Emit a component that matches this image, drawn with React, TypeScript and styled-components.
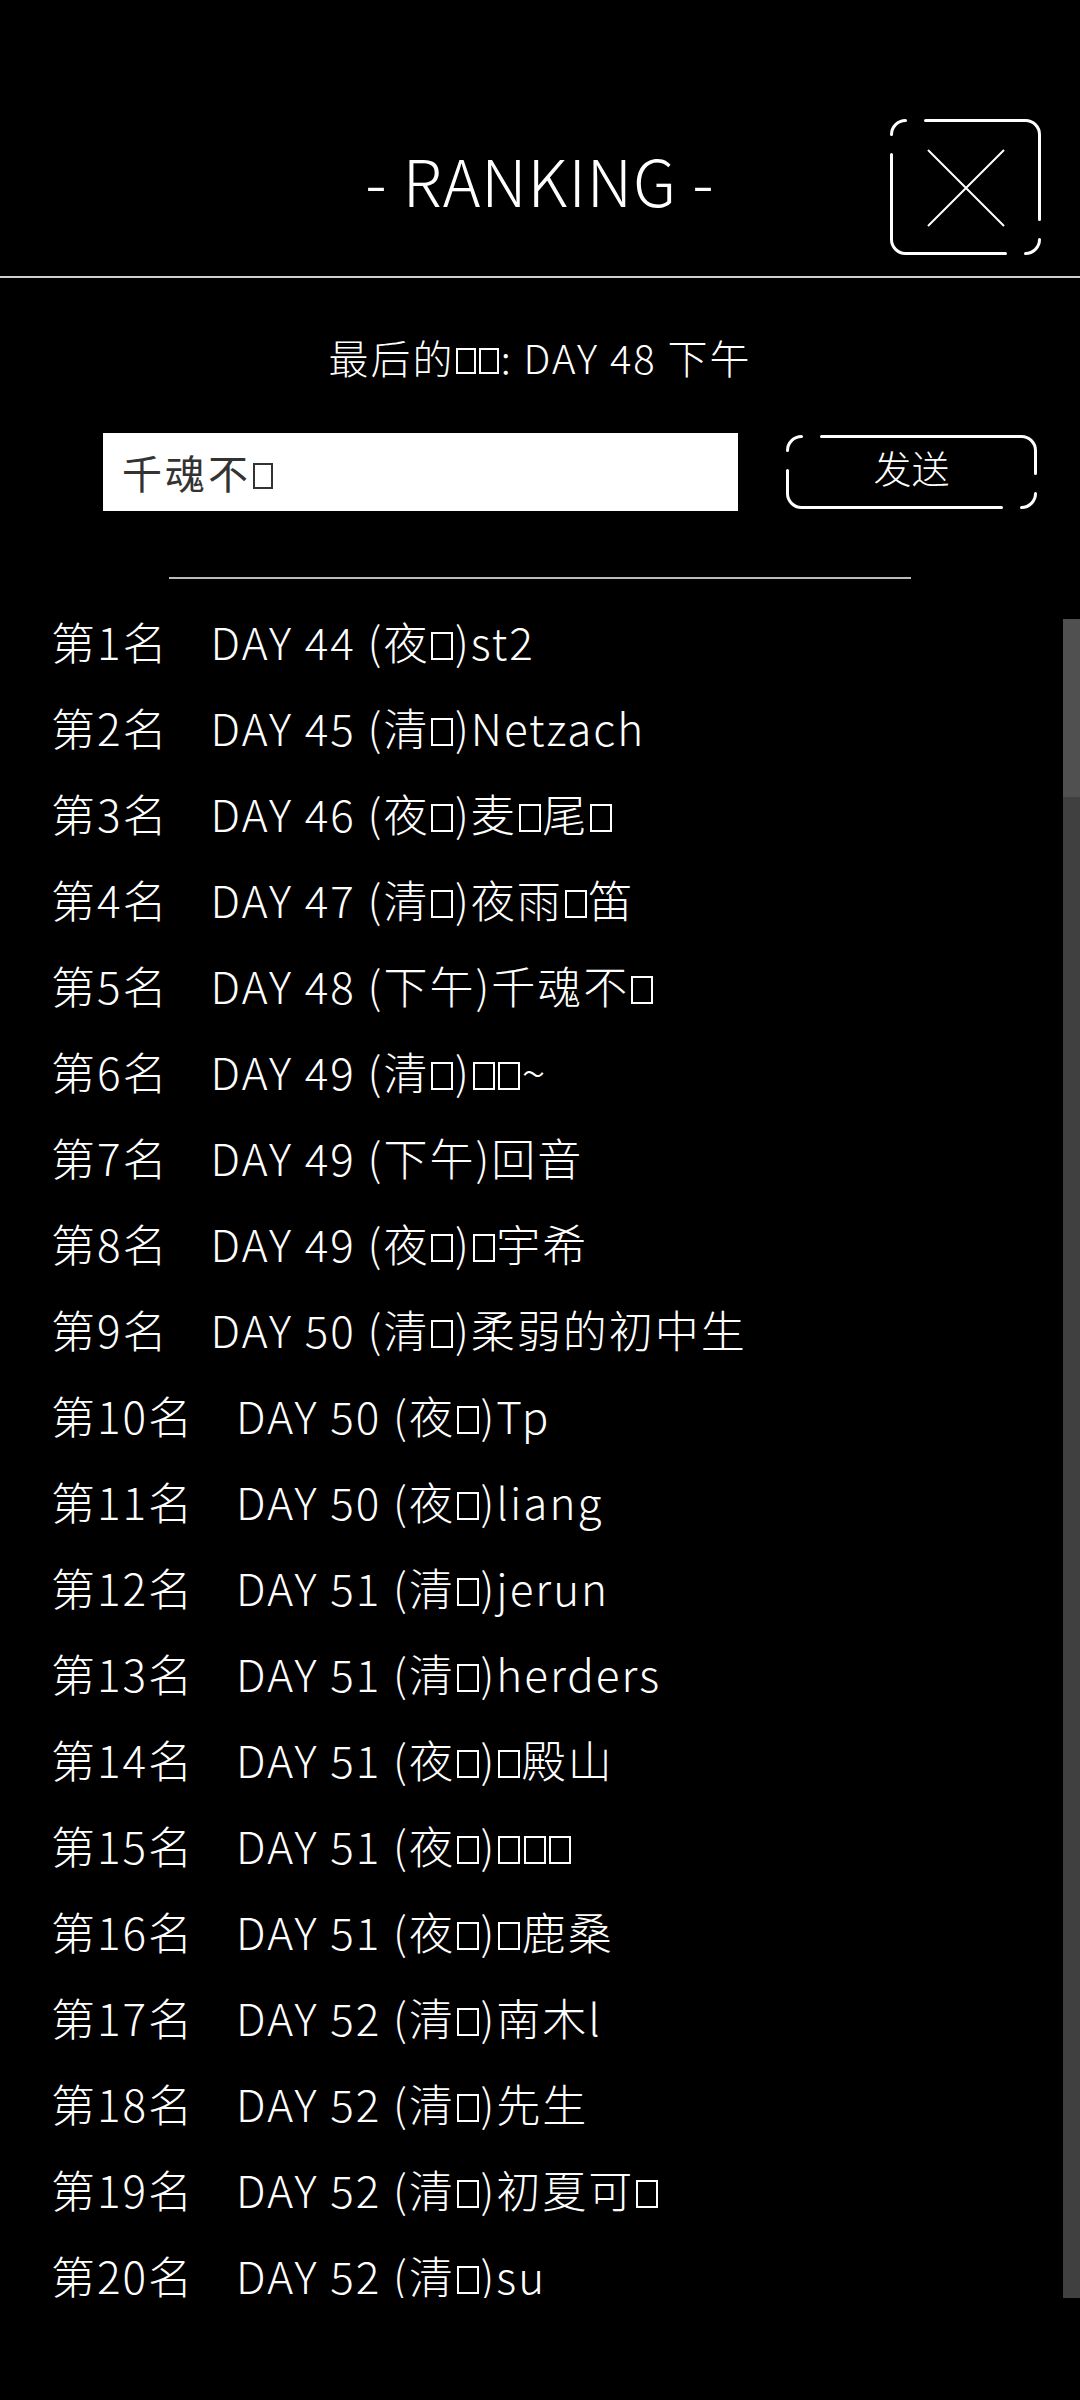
import React from 'react'
import styled, { createGlobalStyle } from 'styled-components'

const GlobalStyle = createGlobalStyle`
	html, body {
		margin: 0;
		padding: 0;
		background: #000;
	}
	body {
		font-family: "Noto Sans CJK SC", "Noto Sans", sans-serif;
		color: #fff;
	}
`

type Entry = { day: number; time: string; name: string }

// ▯ marks glyphs the game font could not draw
const rankings: Entry[] = [
	{ day: 44, time: '夜▯', name: 'st2' },
	{ day: 45, time: '清▯', name: 'Netzach' },
	{ day: 46, time: '夜▯', name: '麦▯尾▯' },
	{ day: 47, time: '清▯', name: '夜雨▯笛' },
	{ day: 48, time: '下午', name: '千魂不▯' },
	{ day: 49, time: '清▯', name: '▯▯~' },
	{ day: 49, time: '下午', name: '回音' },
	{ day: 49, time: '夜▯', name: '▯宇希' },
	{ day: 50, time: '清▯', name: '柔弱的初中生' },
	{ day: 50, time: '夜▯', name: 'Tp' },
	{ day: 50, time: '夜▯', name: 'liang' },
	{ day: 51, time: '清▯', name: 'jerun' },
	{ day: 51, time: '清▯', name: 'herders' },
	{ day: 51, time: '夜▯', name: '▯殿山' },
	{ day: 51, time: '夜▯', name: '▯▯▯' },
	{ day: 51, time: '夜▯', name: '▯鹿桑' },
	{ day: 52, time: '清▯', name: '南木l' },
	{ day: 52, time: '清▯', name: '先生' },
	{ day: 52, time: '清▯', name: '初夏可▯' },
	{ day: 52, time: '清▯', name: 'su' },
]

/* 모서리가 끊어진 테두리 (닫기 / 发送 버튼) */
const framePath = (w: number, h: number) => {
	const s = 1.5, r = 14, g = 20
	const x0 = s, y0 = s, x1 = w - s, y1 = h - s
	return [
		`M${x0} ${y0 + r} A${r} ${r} 0 0 1 ${x0 + r} ${y0}`,
		`M${x0 + r + g} ${y0} H${x1 - r} A${r} ${r} 0 0 1 ${x1} ${y0 + r} V${y1 - r - g}`,
		`M${x1} ${y1 - r} A${r} ${r} 0 0 1 ${x1 - r} ${y1}`,
		`M${x1 - r - g} ${y1} H${x0 + r} A${r} ${r} 0 0 1 ${x0} ${y1 - r} V${y0 + r + g}`,
	].join(' ')
}

const BrokenFrame: React.FC<{ w: number; h: number }> = ({ w, h }) => (
	<FrameSvg width={w} height={h} viewBox={`0 0 ${w} ${h}`}>
		<path d={framePath(w, h)} fill="none" stroke="#fff" strokeWidth="3" strokeLinecap="round" />
	</FrameSvg>
)

const splitTofu = (text: string) =>
	text.split(/(▯)/).filter(Boolean).map((part, i) =>
		part === '▯' ? <Tofu key={i} /> : <React.Fragment key={i}>{part}</React.Fragment>
	)

const App: React.FC = () => {
	return (
		<Page>
			<GlobalStyle />
			<Header>
				<span />
				<Title>- RANKING -</Title>
				<CloseButton aria-label="close">
					<BrokenFrame w={151} h={136} />
					<svg width="151" height="136" viewBox="0 0 151 136">
						<path d="M38 31 L114 107 M114 31 L38 107" stroke="#fff" strokeWidth="2" />
					</svg>
				</CloseButton>
			</Header>

			<LastRecord>最后的<Tofu /><Tofu />: DAY 48 下午</LastRecord>

			<SubmitRow>
				<NameInput>{splitTofu('千魂不▯')}</NameInput>
				<SendButton>
					<BrokenFrame w={251} h={74} />
					<span>发送</span>
				</SendButton>
			</SubmitRow>

			<Divider />

			<ListArea>
				<List>
					{rankings.map((r, i) => (
						<Row key={i}>
							<Rank>第{i + 1}名</Rank>
							<span>DAY {r.day} ({splitTofu(r.time)}){splitTofu(r.name)}</span>
						</Row>
					))}
				</List>
				<ScrollTrack>
					<ScrollThumb />
				</ScrollTrack>
			</ListArea>
		</Page>
	)
}
export default App

const Page = styled.div`
	width: 1080px;
	height: 2400px;
	background: #000;
	display: flex;
	flex-direction: column;
	overflow: hidden;
`

const Header = styled.header`
	display: grid;
	grid-template-columns: 1fr auto 1fr;
	align-items: center;
	padding: 119px 39px 21px;
	border-bottom: 2px solid #cfcfcf;
`

const Title = styled.h1`
	margin: 0 0 14px;
	font-size: 64px;
	font-weight: 300;
	line-height: 1.3;
	letter-spacing: 1px;
	color: #fff;
	white-space: pre;
`

const CloseButton = styled.button`
	justify-self: end;
	position: relative;
	width: 151px;
	height: 136px;
	padding: 0;
	border: none;
	background: transparent;

	svg {
		display: block;
	}
`

const FrameSvg = styled.svg`
	position: absolute;
	top: 0;
	left: 0;
`

const Tofu = styled.span`
	display: inline-block;
	width: 0.5em;
	height: 0.64em;
	margin: 0 0.04em;
	border: 2px solid currentColor;
	box-sizing: border-box;
	vertical-align: baseline;
`

const LastRecord = styled.div`
	margin-top: 50px;
	text-align: center;
	font-size: 40px;
	font-weight: 300;
	line-height: 58px;
	letter-spacing: 2px;
`

const SubmitRow = styled.div`
	display: flex;
	align-items: center;
	gap: 48px;
	margin-top: 47px;
	padding-left: 103px;
`

const NameInput = styled.div`
	width: 635px;
	height: 78px;
	box-sizing: border-box;
	padding-left: 19px;
	background: #fff;
	color: #333;
	font-size: 40px;
	line-height: 78px;
	letter-spacing: 3px;
`

const SendButton = styled.button`
	position: relative;
	width: 251px;
	height: 74px;
	padding: 0 0 10px;
	border: none;
	background: transparent;
	color: #fff;
	font-family: "Noto Sans CJK SC", sans-serif;
	font-size: 38px;
	font-weight: 300;
	line-height: 58px;
	display: flex;
	align-items: center;
	justify-content: center;
`

const Divider = styled.hr`
	width: 742px;
	margin: 66px auto 0;
	border: none;
	border-top: 2px solid #bbb;
`

const ListArea = styled.div`
	display: flex;
	margin-top: 40px;
	height: 1679px;
`

const List = styled.ol`
	flex: 1;
	margin: -10px 0 0;
	padding: 0 0 0 51px;
	list-style: none;
	display: flex;
	flex-direction: column;
	gap: 22px;
	overflow: hidden;
`

const Row = styled.li`
	display: flex;
	flex-shrink: 0;
	font-size: 44px;
	font-weight: 300;
	line-height: 64px;
	letter-spacing: 2px;
	white-space: nowrap;
`

const Rank = styled.span`
	margin-right: 42px;
`

const ScrollTrack = styled.div`
	width: 17px;
	background: #404040;
`

const ScrollThumb = styled.div`
	height: 178px;
	background: #505050;
`
